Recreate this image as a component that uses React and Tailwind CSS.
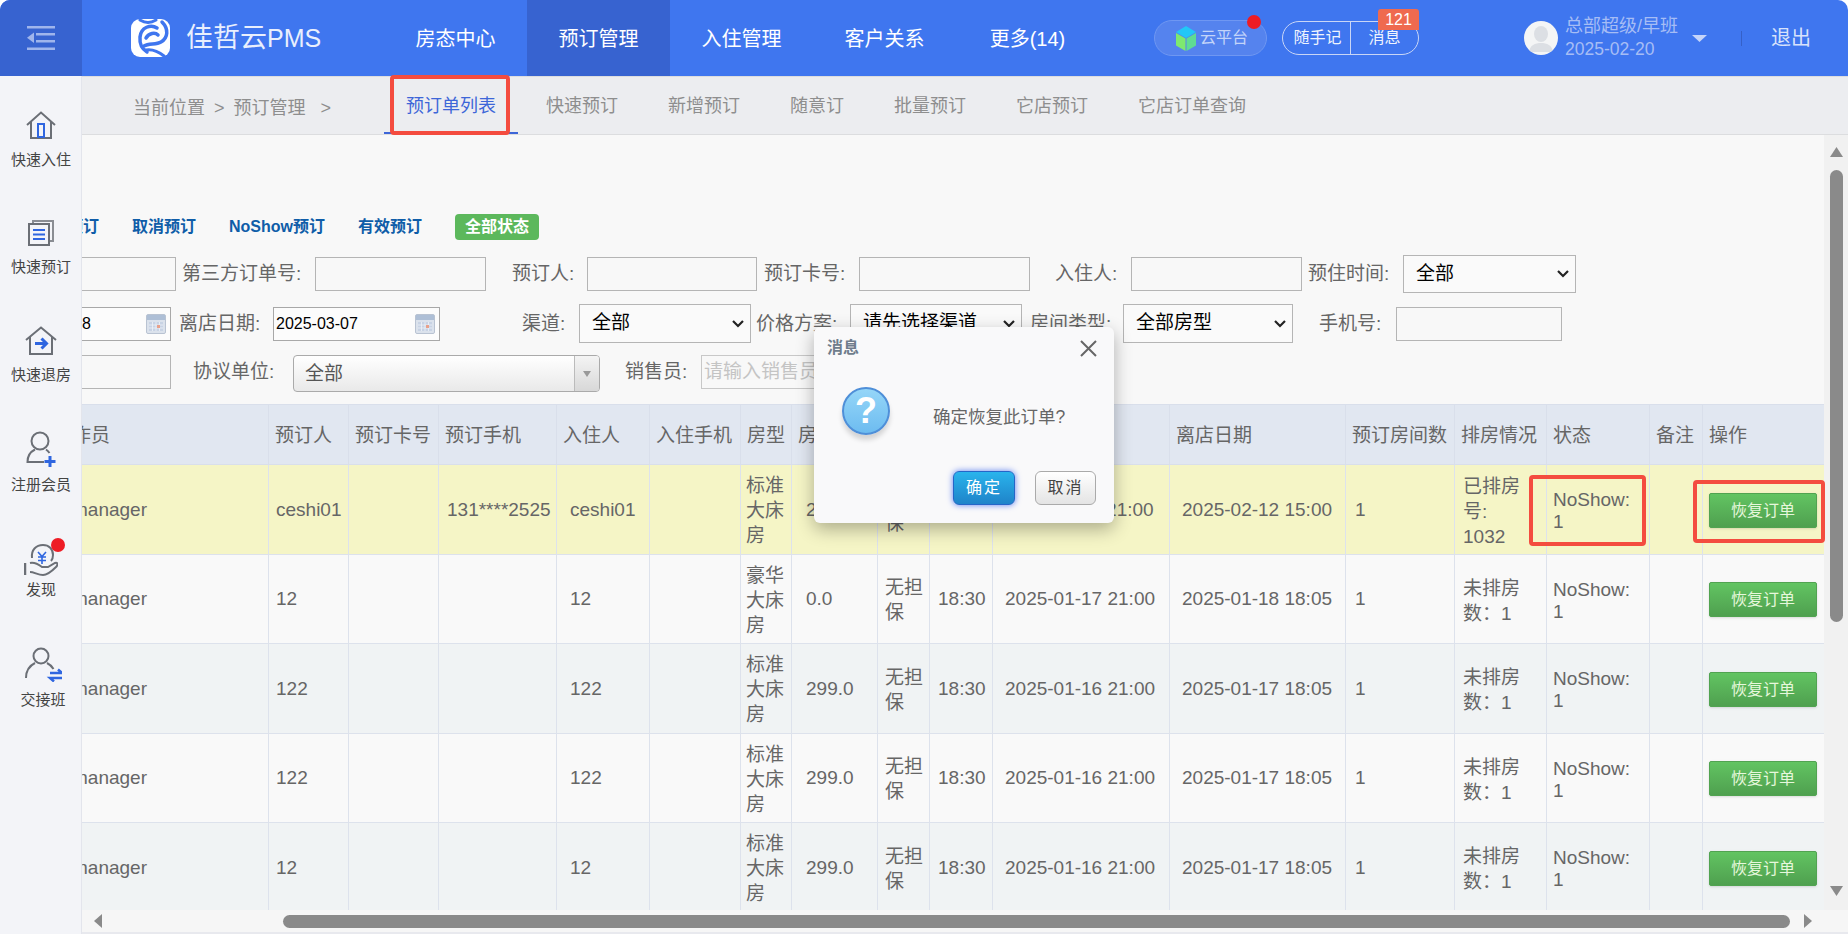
import React from "react";

const navItems = ["房态中心", "预订管理", "入住管理", "客户关系", "更多(14)"];
const subTabs = ["快速预订", "新增预订", "随意订", "批量预订", "它店预订", "它店订单查询"];

const colWidths = ["w-[221px]", "w-[80px]", "w-[90px]", "w-[118px]", "w-[93px]", "w-[91px]", "w-[51px]", "w-[86px]", "w-[52px]", "w-[63px]", "w-[177px]", "w-[176px]", "w-[109px]", "w-[92px]", "w-[103px]", "w-[53px]", "w-[122px]"];
const headers = ["操作员", "预订人", "预订卡号", "预订手机", "入住人", "入住手机", "房型", "房价", "担保", "保留", "入住日期", "离店日期", "预订房间数", "排房情况", "状态", "备注", "操作"];

const rows = [
  { bg: "bg-[#f5f5c6]", booker: "ceshi01", phone: "131****2525", guest: "ceshi01", type: "标准\n大床\n房", price: "299.0", inDate: "2025-02-11 21:00", outDate: "2025-02-12 15:00", room: "已排房\n号:\n1032" },
  { bg: "bg-[#f9f9f9]", booker: "12", phone: "", guest: "12", type: "豪华\n大床\n房", price: "0.0", inDate: "2025-01-17 21:00", outDate: "2025-01-18 18:05", room: "未排房\n数：1" },
  { bg: "bg-[#f0f3f4]", booker: "122", phone: "", guest: "122", type: "标准\n大床\n房", price: "299.0", inDate: "2025-01-16 21:00", outDate: "2025-01-17 18:05", room: "未排房\n数：1" },
  { bg: "bg-[#f9f9f9]", booker: "122", phone: "", guest: "122", type: "标准\n大床\n房", price: "299.0", inDate: "2025-01-16 21:00", outDate: "2025-01-17 18:05", room: "未排房\n数：1" },
  { bg: "bg-[#f0f3f4]", booker: "12", phone: "", guest: "12", type: "标准\n大床\n房", price: "299.0", inDate: "2025-01-16 21:00", outDate: "2025-01-17 18:05", room: "未排房\n数：1" },
];

const td = "border border-[#dde2ec] align-middle whitespace-pre-line";

function Logo() {
  return (
    <svg width="39" height="38" viewBox="0 0 39 38" className="shrink-0">
      <rect x="0" y="0" width="39" height="38" rx="9" fill="#fff" />
      <g fill="none" stroke="#3f76ef" strokeLinecap="round">
        <path d="M9 1 C14 4 20 4 25 1" strokeWidth="3" />
        <path d="M31 3 C38 10 37 19 30 23 C25 26 18 24 13 27" strokeWidth="3.5" />
        <path d="M26 9 C20 5 10 8 9 18 C8.5 24 11 30 16 33" strokeWidth="3.5" />
        <path d="M15 19 C18 14 24 13 27 16" strokeWidth="3.5" />
        <path d="M15 31 C21 30 28 33 33 37" strokeWidth="3" />
      </g>
    </svg>
  );
}

function CalendarIcon() {
  return (
    <svg width="20" height="20" viewBox="0 0 20 20" className="shrink-0">
      <rect x="0.5" y="0.5" width="19" height="19" rx="1.5" fill="#dbe2ec" stroke="#b9c3d2" />
      <rect x="1" y="1" width="18" height="5" fill="#aebfd6" />
      <rect x="3" y="8" width="14" height="9" fill="#c8d3e4" />
      <path d="M3 11H17M3 14H17M6.5 8V17M10 8V17M13.5 8V17" stroke="#eef2f7" strokeWidth="0.8" />
      <rect x="11" y="11" width="3" height="3" fill="#e8a08a" />
    </svg>
  );
}

function Field({ className }) {
  return <input className={`block h-[34px] shrink-0 border border-[#b5b5b5] bg-transparent px-[3px] text-[16px] text-black outline-none ${className}`} />;
}

function DateField({ value, className }) {
  return (
    <div className={`flex h-[34px] shrink-0 items-center justify-between border border-[#a8a8a8] bg-[#fcfcfc] pl-[2px] pr-[4px] text-[16px] text-black ${className}`}>
      <span>{value}</span>
      <CalendarIcon />
    </div>
  );
}

function Select({ options, className }) {
  return (
    <div className={`relative shrink-0 ${className}`}>
      <select className="block h-full w-full appearance-none border border-[#b5b5b5] bg-[#fafafa] pl-[12px] text-[19px] text-black outline-none">
        {options.map((o) => <option key={o}>{o}</option>)}
      </select>
      <svg width="12" height="8" viewBox="0 0 12 8" fill="none" stroke="#222" strokeWidth="2.2" className="pointer-events-none absolute right-[7px] top-1/2 -mt-[4px]">
        <path d="M1 1 L6 6 L11 1" />
      </svg>
    </div>
  );
}

function Label({ children, className }) {
  return <span className={`shrink-0 whitespace-nowrap text-[19px] leading-[34px] text-[#666] ${className}`}>{children}</span>;
}

function SideItem({ icon, label, className, labelClass }) {
  return (
    <div className={`flex flex-col items-center pl-[1px] ${className}`}>
      {icon}
      <span className={`text-[15px] leading-[20px] whitespace-nowrap text-[#444] ${labelClass}`}>{label}</span>
    </div>
  );
}

function Sidebar() {
  const gray = "#6b6f76";
  const blue = "#2f66e0";
  return (
    <div className="flex h-full w-[82px] shrink-0 flex-col border-r border-[#e3e5ec] bg-[#f3f4f8]">
      <SideItem
        className="mt-[35px]"
        labelClass="mt-[11px]"
        label="快速入住"
        icon={
          <svg width="30" height="28" viewBox="0 0 30 28" fill="none" strokeWidth="2">
            <path d="M1 14 L15 1.5 L29 14" stroke={gray} />
            <path d="M5 11 V27 H25 V11" stroke={gray} />
            <rect x="12" y="13" width="6" height="13" stroke={blue} />
          </svg>
        }
      />
      <SideItem
        className="mt-[50px]"
        labelClass="mt-[11px]"
        label="快速预订"
        icon={
          <svg width="26" height="26" viewBox="0 0 26 26" fill="none" strokeWidth="2">
            <path d="M5 3 V1 H25 V21 H22" stroke="#8a8d93" />
            <rect x="1" y="4" width="20" height="21" stroke={gray} />
            <path d="M5 10 H17 M5 14.5 H17 M5 19 H17" stroke={blue} />
          </svg>
        }
      />
      <SideItem
        className="mt-[49px]"
        labelClass="mt-[10px]"
        label="快速退房"
        icon={
          <svg width="32" height="29" viewBox="0 0 32 29" fill="none" strokeWidth="2">
            <path d="M1 14 L16 1.5 L31 14" stroke={gray} />
            <path d="M5 11 V28 H27 V11" stroke={gray} />
            <path d="M10 17.5 H21 M16.5 12.5 L21.5 17.5 L16.5 22.5" stroke={blue} strokeWidth="3" />
          </svg>
        }
      />
      <SideItem
        className="mt-[46px]"
        labelClass="mt-[8px]"
        label="注册会员"
        icon={
          <svg width="30" height="36" viewBox="0 0 30 36" fill="none" strokeWidth="2">
            <circle cx="14" cy="10" r="8.5" stroke={gray} />
            <path d="M9 18.5 C4 21 1.5 25 1.5 31 H18" stroke={gray} />
            <path d="M20 18.5 C21.5 19.5 22.5 20.5 23.5 22" stroke={gray} />
            <path d="M24 25 V36 M18.5 30.5 H29.5" stroke={blue} strokeWidth="3" />
          </svg>
        }
      />
      <div className="relative mt-[43px] flex flex-col items-center pl-[1px]">
        <svg width="34" height="38" viewBox="0 0 34 38" fill="none" strokeWidth="2">
          <path d="M8 20 C7 12 12 7 19 7 C25 7 29 11 29 17 C29 20 28 22 27 23" stroke={gray} />
          <path d="M14 14 L18 18.5 L22 14 M14 19 H22 M14 22.5 H22 M18 18.5 V26" stroke={blue} strokeWidth="1.6" />
          <path d="M1 25 V37" stroke={gray} strokeWidth="2.5" />
          <path d="M6 25 C10 24 14 26 18 29 H24 L31 25 C34 24 34 27 32 29 C28 33 23 37 19 37 C14 37 10 34 6 34" stroke={gray} />
        </svg>
        <span className="absolute left-[51px] top-0 h-[14px] w-[14px] rounded-full bg-[#ee1c25]" />
        <span className="mt-[4px] text-[15px] leading-[20px] text-[#444]">发现</span>
      </div>
      <SideItem
        className="mt-[47px] pl-[5px]"
        labelClass="mt-[8px]"
        label="交接班"
        icon={
          <svg width="37" height="35" viewBox="0 0 37 35" fill="none" strokeWidth="2">
            <circle cx="16" cy="9" r="7.5" stroke={gray} />
            <path d="M10 16 C4 19 1 24 1 31" stroke={gray} />
            <path d="M22 16 C25 17.5 27 19.5 28.5 22" stroke={gray} />
            <path d="M25 26 H37 L33 22.5 M37 31 H25 L29 34.5" stroke={blue} strokeWidth="2.5" />
          </svg>
        }
      />
    </div>
  );
}

function Header() {
  return (
    <div className="flex h-[76px] shrink-0 items-center bg-[#3f76ef]">
      <div className="flex h-full w-[82px] shrink-0 items-center justify-center bg-[#3763d0]">
        <svg width="28" height="24" viewBox="0 0 28 24" fill="#9fb5ec">
          <rect x="0" y="0" width="28" height="2.5" />
          <rect x="9" y="7" width="19" height="2.5" />
          <rect x="9" y="14" width="19" height="2.5" />
          <rect x="0" y="21.5" width="28" height="2.5" />
          <path d="M0 11.75 L7 6.5 V17 Z" />
        </svg>
      </div>
      <div className="flex w-[302px] shrink-0 items-center pl-[49px]">
        <Logo />
        <span className="ml-[16px] text-[27px] whitespace-nowrap text-[#e9effd]">佳哲云<span className="text-[25px]">PMS</span></span>
      </div>
      <div className="flex h-full shrink-0">
        {navItems.map((n, i) => (
          <div key={n} className={`flex h-full w-[143px] items-center justify-center pt-[2px] text-[20px] text-white ${i === 1 ? "bg-[#3763d0]" : ""}`}>{n}</div>
        ))}
      </div>
      <div className="relative ml-[55px] flex h-[36px] w-[113px] shrink-0 items-center rounded-[18px] border border-[#6f97f2] bg-[#5583ee] pl-[20px]">
        <svg width="22" height="25" viewBox="0 0 22 25" className="shrink-0">
          <path d="M11 0 L21 6 L11 12 L1 6 Z" fill="#22c7f7" />
          <path d="M1 7 L10.5 12.5 V25 L1 19.5 Z" fill="#7ee96f" />
          <path d="M21 7 L11.5 12.5 V25 L21 19.5 Z" fill="#5fdc93" />
        </svg>
        <span className="ml-[3px] text-[16px] whitespace-nowrap text-[#c3d4f9]">云平台</span>
        <span className="absolute left-[92px] top-[-6px] h-[14px] w-[14px] rounded-full bg-[#ee1c25]" />
      </div>
      <div className="relative ml-[15px] flex h-[34px] w-[137px] shrink-0 items-center rounded-[17px] border border-[#c9d6f6] text-[16px] text-[#eef3fe]">
        <span className="w-[67px] text-center whitespace-nowrap pl-[2px]">随手记</span>
        <span className="h-full w-px bg-[#c9d6f6]" />
        <span className="w-[67px] text-center whitespace-nowrap">消息</span>
        <span className="absolute left-[95px] top-[-13px] flex h-[21px] w-[41px] items-center justify-center rounded-t-[3px] bg-[#ef6a4f] text-[16px] text-white">121</span>
      </div>
      <div className="ml-[105px] flex h-[34px] w-[34px] shrink-0 items-center justify-center overflow-hidden rounded-full bg-[#f4f5f6]">
        <svg width="34" height="34" viewBox="0 0 34 34" fill="#dcdfe4">
          <ellipse cx="17" cy="13" rx="7" ry="8" />
          <path d="M5 31 C6 24 11 22 17 22 C23 22 28 24 29 31 Z" />
        </svg>
      </div>
      <div className="ml-[7px] flex w-[127px] shrink-0 flex-col text-[#a6bdf5]">
        <span className="text-[18px] leading-[23px] whitespace-nowrap">总部超级/早班</span>
        <span className="text-[17.5px] leading-[23px] whitespace-nowrap">2025-02-20</span>
      </div>
      <svg width="15" height="7" viewBox="0 0 15 7" className="shrink-0"><path d="M0 0 H15 L7.5 7 Z" fill="#c5d4f9" /></svg>
      <span className="ml-[34px] h-[15px] w-px shrink-0 bg-[#3560c8]" />
      <span className="ml-[29px] text-[20px] whitespace-nowrap text-[#d8e2fb]">退出</span>
    </div>
  );
}

function SubNav() {
  return (
    <div className="flex h-[59px] shrink-0 items-stretch border-y border-[#dcdddf] bg-[#ecedf0] text-[18px] text-[#8e8e8e]">
      <div className="flex w-[302px] shrink-0 items-center pl-[51px] pt-[6px] whitespace-nowrap">
        <span>当前位置</span>
        <span className="ml-[9px]">&gt;</span>
        <span className="ml-[9px]">预订管理</span>
        <span className="ml-[15px]">&gt;</span>
      </div>
      <div className="flex w-[134px] shrink-0 items-center justify-center border-b-2 border-[#3d66d8] pt-[3px] text-[#3d66d8]">预订单列表</div>
      <div className="ml-[3px] flex">
        {subTabs.map((t) => (
          <div key={t} className="flex items-center px-[25px] pt-[2px] whitespace-nowrap">{t}</div>
        ))}
      </div>
    </div>
  );
}

function Filters() {
  return (
    <div className="pt-[79px]">
      <div className="-ml-[47px] flex h-[26px] items-center gap-[33px] whitespace-nowrap text-[16px] font-bold text-[#0f5da8]">
        <span>全部预订</span>
        <span>取消预订</span>
        <span>NoShow预订</span>
        <span>有效预订</span>
        <span className="flex h-[26px] w-[84px] items-center justify-center rounded-[4px] bg-[#5cb85c] text-white">全部状态</span>
      </div>
      <div className="mt-[15px] flex h-[38px] items-center">
        <Field className="-ml-[2px] w-[96px]" />
        <Label className="ml-[6px] w-[122px]">第三方订单号:</Label>
        <Field className="ml-[11px] w-[171px]" />
        <Label className="ml-[26px] w-[65px]">预订人:</Label>
        <Field className="ml-[10px] w-[170px]" />
        <Label className="ml-[7px] w-[84px]">预订卡号:</Label>
        <Field className="ml-[11px] w-[171px]" />
        <Label className="ml-[25px] w-[65px]">入住人:</Label>
        <Field className="ml-[11px] w-[171px]" />
        <Label className="ml-[6px] w-[84px]">预住时间:</Label>
        <Select options={["全部"]} className="ml-[11px] h-[38px] w-[173px]" />
      </div>
      <div className="mt-[11px] flex h-[39px] items-center">
        <DateField value="2025-02-28" className="-ml-[76px] w-[165px]" />
        <Label className="ml-[8px] w-[84px]">离店日期:</Label>
        <DateField value="2025-03-07" className="ml-[10px] w-[167px]" />
        <Label className="ml-[82px] w-[46px]">渠道:</Label>
        <Select options={["全部"]} className="ml-[11px] h-[39px] w-[172px]" />
        <Label className="ml-[5px] w-[85px]">价格方案:</Label>
        <Select options={["请先选择渠道"]} className="ml-[9px] h-[39px] w-[172px]" />
        <Label className="ml-[8px] w-[85px]">房间类型:</Label>
        <Select options={["全部房型"]} className="ml-[8px] h-[39px] w-[170px]" />
        <Label className="ml-[26px] w-[66px]">手机号:</Label>
        <Field className="ml-[11px] w-[166px]" />
      </div>
      <div className="mt-[12px] flex h-[37px] items-start">
        <Field className="-ml-[2px] w-[91px]" />
        <Label className="ml-[22px] w-[84px]">协议单位:</Label>
        <div className="ml-[16px] flex h-[37px] w-[307px] shrink-0 overflow-hidden rounded-[4px] border border-[#aaa] bg-gradient-to-b from-white to-[#e9e9e9]">
          <span className="flex-1 pl-[11px] text-[19px] leading-[35px] text-[#555]">全部</span>
          <span className="flex w-[25px] items-center justify-center border-l border-[#bbb] bg-gradient-to-b from-[#f4f4f4] to-[#d8d8d8]">
            <svg width="8" height="6" viewBox="0 0 8 6"><path d="M0 0 H8 L4 6 Z" fill="#999" /></svg>
          </span>
        </div>
        <Label className="ml-[25px] w-[65px]">销售员:</Label>
        <input placeholder="请输入销售员" className="ml-[11px] block h-[34px] w-[170px] shrink-0 border border-[#c8c8c8] bg-transparent px-[2px] text-[19px] outline-none placeholder:text-[#c4c4c4]" />
      </div>
    </div>
  );
}

function OrderTable() {
  return (
    <table className="mt-[12px] -ml-[35px] w-[1777px] table-fixed border-collapse text-[19px] leading-[25px] text-[#666]">
      <colgroup>
        {colWidths.map((w, i) => <col key={i} className={w} />)}
      </colgroup>
      <thead>
        <tr className="h-[60px] bg-[#e1e7f1]">
          {headers.map((h, i) => (
            <th key={h} className={`border border-[#d9dfeb] pr-0 pt-[2px] text-left font-normal whitespace-nowrap ${i === 0 ? "pl-[5px]" : "pl-[6px]"}`}>{h}</th>
          ))}
        </tr>
      </thead>
      <tbody>
        {rows.map((r, i) => (
          <tr key={i} className={`h-[89.5px] ${r.bg}`}>
            <td className={`${td} pl-[24px]`}>manager</td>
            <td className={`${td} pl-[7px]`}>{r.booker}</td>
            <td className={td}></td>
            <td className={`${td} pl-[8px]`}>{r.phone}</td>
            <td className={`${td} pl-[13px]`}>{r.guest}</td>
            <td className={td}></td>
            <td className={`${td} pl-[5px] pt-[3px]`}>{r.type}</td>
            <td className={`${td} pl-[14px]`}>{r.price}</td>
            <td className={`${td} pl-[7px] pt-[3px]`}>{"无担\n保"}</td>
            <td className={`${td} pl-[8px]`}>18:30</td>
            <td className={`${td} pl-[12px]`}>{r.inDate}</td>
            <td className={`${td} pl-[12px]`}>{r.outDate}</td>
            <td className={`${td} pl-[9px]`}>1</td>
            <td className={`${td} pl-[8px] pt-[4px]`}>{r.room}</td>
            <td className={`${td} pl-[6px] pt-[4px] leading-[22px]`}>{"NoShow:\n1"}</td>
            <td className={td}></td>
            <td className={`${td} pl-[6px] pt-[2px]`}>
              <button className="block h-[35px] w-[108px] rounded-[2px] border border-[#51a351] bg-gradient-to-b from-[#62c462] to-[#4fa04f] text-[16px] leading-[33px] text-[#e6f7dc] shadow-sm">恢复订单</button>
            </td>
          </tr>
        ))}
      </tbody>
    </table>
  );
}

function ConfirmDialog() {
  return (
    <div className="absolute left-[814px] top-[327px] z-10 h-[196px] w-[300px] rounded-[6px] bg-[#f9f9fa] shadow-[0_6px_18px_rgba(0,0,0,0.3)]">
      <div className="flex h-[42px] items-center justify-between pl-[13px] pr-[17px]">
        <span className="text-[16px] font-bold text-[#6f7d8c]">消息</span>
        <svg width="17" height="17" viewBox="0 0 17 17" stroke="#666" strokeWidth="2"><path d="M1 1 L16 16 M16 1 L1 16" /></svg>
      </div>
      <div className="flex items-center pl-[28px] pt-[18px]">
        <div className="flex h-[48px] w-[48px] shrink-0 items-center justify-center rounded-full border-2 border-[#4f8fd8] bg-gradient-to-b from-[#95d6f8] to-[#6dbcf0] text-[36px] font-bold leading-none text-white shadow-[0_5px_5px_rgba(0,0,0,0.15)]">?</div>
        <span className="ml-[43px] pt-[13px] text-[17.5px] whitespace-nowrap text-[#666]">确定恢复此订单?</span>
      </div>
      <div className="mt-[36px] flex justify-end gap-[20px] pr-[18px]">
        <button className="h-[34px] w-[62px] rounded-[6px] border border-[#2566c8] bg-gradient-to-b from-[#2ab4ec] to-[#1f83c9] text-[16px] tracking-[2px] text-white shadow-[0_0_6px_#5a7df0]">确定</button>
        <button className="h-[34px] w-[61px] rounded-[6px] border border-[#aaa] bg-gradient-to-b from-white to-[#e4e4e4] text-[16px] tracking-[2px] text-[#444]">取消</button>
      </div>
    </div>
  );
}

export default function App() {
  return (
    <div className="relative h-[934px] w-full overflow-hidden bg-white font-['Liberation_Sans','Noto_Sans_CJK_SC',sans-serif]">
      <div className="flex h-full flex-col overflow-hidden rounded-t-[10px]">
        <Header />
        <div className="flex min-h-0 flex-1">
          <Sidebar />
          <div className="flex min-w-0 flex-1 flex-col">
            <SubNav />
            <div className="flex min-h-0 flex-1">
              <div className="min-w-0 flex-1 overflow-hidden bg-[#f8f8f8]">
                <Filters />
                <OrderTable />
              </div>
              <div className="flex w-[24px] shrink-0 flex-col bg-[#f1f1f1] pl-[6px] pt-[12px]">
                <svg width="13" height="10" viewBox="0 0 13 10" className="shrink-0"><path d="M6.5 0 L13 10 H0 Z" fill="#8a8a8a" /></svg>
                <div className="mt-[13px] h-[452px] w-[13px] shrink-0 rounded-[7px] bg-[#8a8a8a]" />
                <svg width="13" height="10" viewBox="0 0 13 10" className="mt-[264px] shrink-0"><path d="M0 0 H13 L6.5 10 Z" fill="#8a8a8a" /></svg>
              </div>
            </div>
            <div className="flex h-[24px] shrink-0 items-center border-b-2 border-[#e8e9ee] bg-[#f6f6f6] pl-[12px]">
              <svg width="8" height="14" viewBox="0 0 8 14" className="shrink-0"><path d="M8 0 V14 L0 7 Z" fill="#8a8a8a" /></svg>
              <div className="ml-[181px] h-[13px] w-[1507px] shrink-0 rounded-[7px] bg-[#8a8a8a]" />
              <svg width="8" height="14" viewBox="0 0 8 14" className="ml-[14px] shrink-0"><path d="M0 0 V14 L8 7 Z" fill="#8a8a8a" /></svg>
            </div>
          </div>
        </div>
      </div>
      <ConfirmDialog />
      <div className="absolute left-[390px] top-[75px] h-[60px] w-[120px] rounded-[4px] border-4 border-[#f44c3f]" />
      <div className="absolute left-[1529px] top-[475px] h-[71px] w-[117px] rounded-[4px] border-4 border-[#f44c3f]" />
      <div className="absolute left-[1693px] top-[480px] h-[63px] w-[132px] rounded-[4px] border-4 border-[#f44c3f]" />
    </div>
  );
}
